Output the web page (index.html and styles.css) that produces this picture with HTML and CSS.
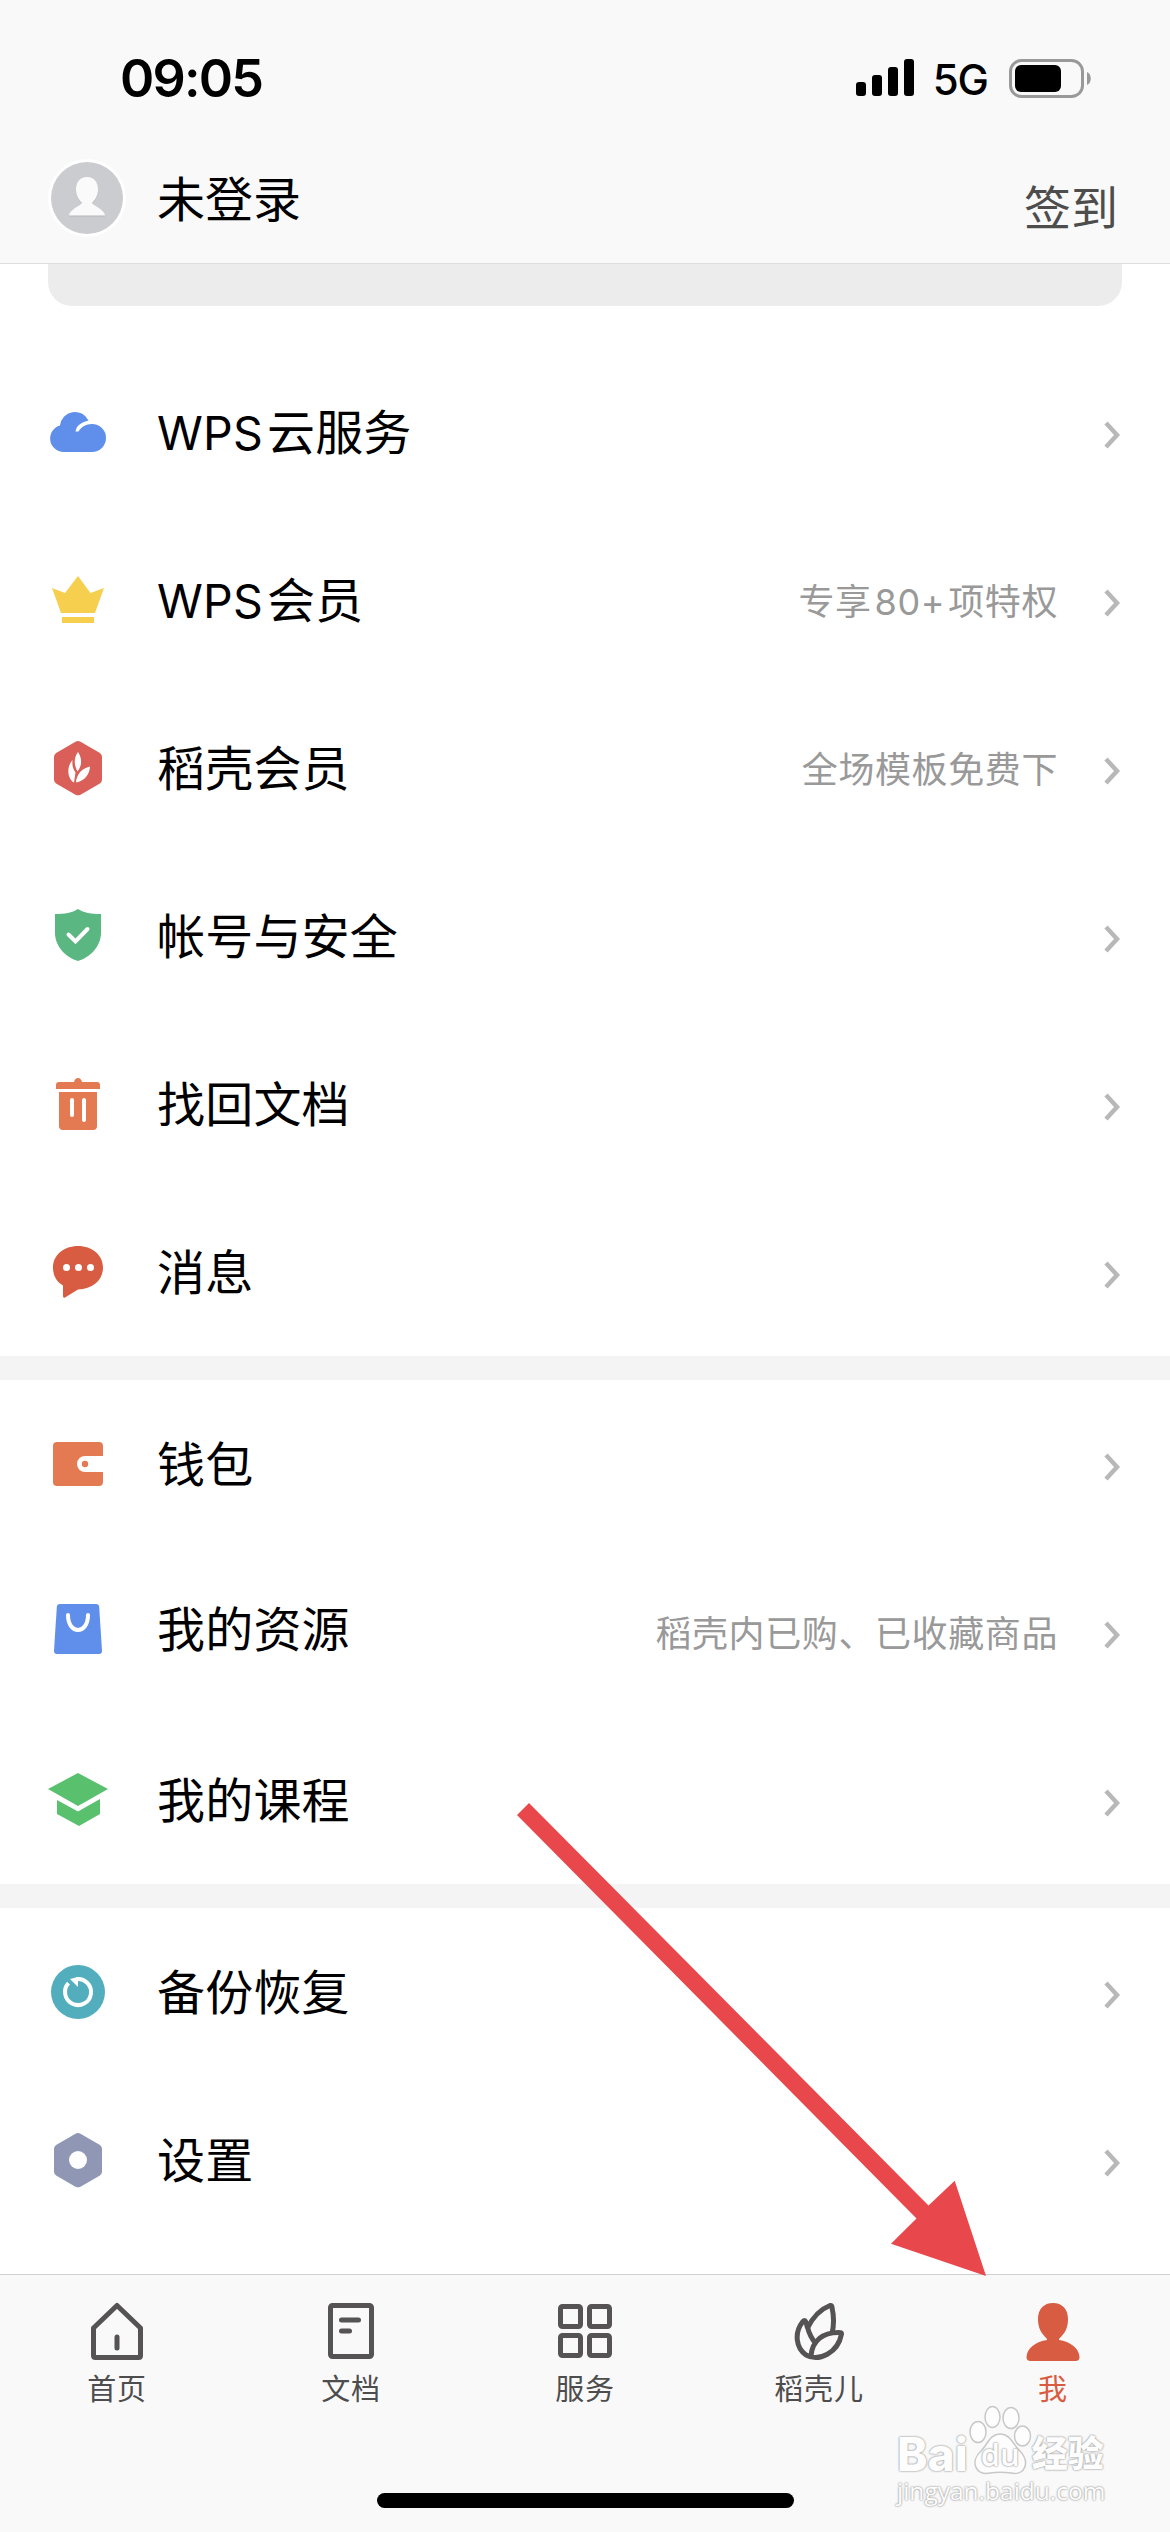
FILE: index.html
```html
<!DOCTYPE html>
<html lang="zh-CN">
<head>
    <meta charset="UTF-8">
    <meta name="viewport" content="width=device-width, initial-scale=1.0">
    <title>WPS - 我</title>
    <link rel="stylesheet" href="styles.css">
</head>
<body>
    <div class="screen">
        <header class="header">
            <div class="status-bar">
                <span class="time">09:05</span>
                <div class="status-right">
                    <svg class="signal" width="58" height="38" viewBox="0 0 58 38">
                        <rect x="0" y="23" width="10" height="14" rx="3"/>
                        <rect x="16" y="16" width="10" height="21" rx="3"/>
                        <rect x="32" y="8" width="10" height="29" rx="3"/>
                        <rect x="48" y="0" width="10" height="37" rx="3"/>
                    </svg>
                    <span class="network">5G</span>
                    <svg class="battery" width="82" height="39" viewBox="0 0 82 39">
                        <rect x="1.5" y="1.5" width="72" height="36" rx="11" fill="none" stroke="#999" stroke-width="3"/>
                        <rect x="6" y="6" width="46" height="27" rx="6"/>
                        <path d="M78 13c5 2 5 11 0 13z" fill="#999"/>
                    </svg>
                </div>
            </div>
            <div class="profile">
                <svg class="avatar" width="78" height="78" viewBox="0 0 78 78">
                    <circle cx="39" cy="39" r="39" fill="#fff"/>
                    <circle cx="39" cy="39" r="36" fill="#cbccd0"/>
                    <path d="M39 19c7 0 11 5 11 12.500c0 6-3 10.500-6 13.500c2 3 13 7 13 12.500H21c0-5.500 11-9.500 13-12.500c-3-3-6-7.500-6-13.500c0-7.500 4-12.500 11-12.500z" fill="#b5b6ba"/>
                    <path d="M39 18c7 0 11 5 11 12.500c0 6-3 10.500-6 13.500c2 3 13 7 13 12.500H21c0-5.500 11-9.500 13-12.500c-3-3-6-7.500-6-13.500c0-7.500 4-12.500 11-12.500z" fill="#fafafa"/>
                </svg>
                <span class="username">未登录</span>
                <span class="sign-in">签到</span>
            </div>
        </header>

        <main class="content">
            <div class="card"></div>

            <ul class="menu">
                <li class="menu-item">
                    <svg class="icon" viewBox="0 0 60 60">
                        <path d="M15.500 50A13.500 13.500 0 0 1 12 23.500A15 15 0 0 1 40.500 18.500C34 20 28.500 23 27.500 29.500h3C33 25 38 22 44 22a14 14 0 0 1 0 28z" fill="#5f8fea"/>
                    </svg>
                    <span class="label"><span class="latin">WPS</span>云服务</span>
                    <svg class="chevron" viewBox="0 0 20 30"><path d="M3 3l11 12-11 12"/></svg>
                </li>
                <li class="menu-item">
                    <svg class="icon" viewBox="0 0 60 60">
                        <path d="M30 6l12.500 17 13.500-5-9 25H13L4 18l13 5z" fill="#f6cf4e"/>
                        <rect x="14" y="47" width="32" height="6" fill="#f6cf4e"/>
                    </svg>
                    <span class="label"><span class="latin">WPS</span>会员</span>
                    <span class="hint">专享<span class="num">80+</span>项特权</span>
                    <svg class="chevron" viewBox="0 0 20 30"><path d="M3 3l11 12-11 12"/></svg>
                </li>
                <li class="menu-item">
                    <svg class="icon" viewBox="0 0 60 60">
                        <path d="M27.500 3.700q2.500-1.300 5 0l19 11q2.500 1.500 2.500 4v23q0 2.500-2.500 4l-19 11q-2.500 1.300-5 0l-19-11q-2.500-1.500-2.500-4v-23q0-2.500 2.500-4z" fill="#d95f58"/>
                        <path d="M30 14c4 6 4.500 13-.5 19.500c-3.500-6.500-4-13.500.5-19.500zM24.500 22c-.5 6 .5 9 3 12.500l-1.500 10c-7-4-7.500-16-1.500-22.500zM42 28.500c-.5 8-5.500 14.500-14 16c.5-8 5.500-14 14-16z" fill="#fff"/>
                    </svg>
                    <span class="label">稻壳会员</span>
                    <span class="hint">全场模板免费下</span>
                    <svg class="chevron" viewBox="0 0 20 30"><path d="M3 3l11 12-11 12"/></svg>
                </li>
                <li class="menu-item">
                    <svg class="icon" viewBox="0 0 60 60">
                        <path d="M30 3c6 4 13 5 23 5v19c0 14-12 25-23 28C19 52 7 41 7 27V8c10 0 17-1 23-5z" fill="#5bb781"/>
                        <path d="M20.500 28.500l7 7 12-12.500" fill="none" stroke="#fff" stroke-width="4" stroke-linecap="round"/>
                    </svg>
                    <span class="label">帐号与安全</span>
                    <svg class="chevron" viewBox="0 0 20 30"><path d="M3 3l11 12-11 12"/></svg>
                </li>
                <li class="menu-item">
                    <svg class="icon" viewBox="0 0 60 60">
                        <path d="M8 15v-4q0-3 3-3h15q1-4 4-4t4 4h15q3 0 3 3v4z" fill="#e37a51"/>
                        <path d="M11 18h38v34q0 4-4 4H15q-4 0-4-4z" fill="#e37a51"/>
                        <path d="M24 26v15M36 26v20" stroke="#fff" stroke-width="4" stroke-linecap="round"/>
                    </svg>
                    <span class="label">找回文档</span>
                    <svg class="chevron" viewBox="0 0 20 30"><path d="M3 3l11 12-11 12"/></svg>
                </li>
                <li class="menu-item">
                    <svg class="icon" viewBox="0 0 60 60">
                        <path d="M30 4c14 0 25 9 25 21.500S45 47 30 47.500L17 55.500q-2 .8-2-1.200V43.500C8 39.500 5 33 5 25.500C5 13 16 4 30 4z" fill="#d85c41"/>
                        <g fill="#fff"><circle cx="18.500" cy="25.500" r="3.500"/><circle cx="30.500" cy="25.500" r="3.500"/><circle cx="42.500" cy="25.500" r="3.500"/></g>
                    </svg>
                    <span class="label">消息</span>
                    <svg class="chevron" viewBox="0 0 20 30"><path d="M3 3l11 12-11 12"/></svg>
                </li>
            </ul>

            <ul class="menu">
                <li class="menu-item">
                    <svg class="icon" viewBox="0 0 60 60">
                        <path d="M9 8h42q4 0 4 4v10H37a8 8 0 0 0 0 16h18v10q0 4-4 4H9q-4 0-4-4V12q0-4 4-4z" fill="#e37a51"/>
                        <circle cx="37" cy="30" r="3.200" fill="#e37a51"/>
                    </svg>
                    <span class="label">钱包</span>
                    <svg class="chevron" viewBox="0 0 20 30"><path d="M3 3l11 12-11 12"/></svg>
                </li>
                <li class="menu-item raised">
                    <svg class="icon" viewBox="0 0 60 60">
                        <path d="M12 5h36q3 0 3.200 3l2.800 44q0 3-3 3H9q-3 0-3-3L8.800 8Q9 5 12 5z" fill="#5f8fea"/>
                        <path d="M20 16c0 20 20 20 20 0" fill="none" stroke="#fff" stroke-width="4" stroke-linecap="round"/>
                    </svg>
                    <span class="label">我的资源</span>
                    <span class="hint">稻壳内已购、已收藏商品</span>
                    <svg class="chevron" viewBox="0 0 20 30"><path d="M3 3l11 12-11 12"/></svg>
                </li>
                <li class="menu-item">
                    <svg class="icon" viewBox="0 0 60 60">
                        <path d="M30 3l30 16-30 17L0 19z" fill="#59c06e"/>
                        <path d="M9 30l21 11.500L52 29v15L31 56 9 44z" fill="#59c06e"/>
                    </svg>
                    <span class="label">我的课程</span>
                    <svg class="chevron" viewBox="0 0 20 30"><path d="M3 3l11 12-11 12"/></svg>
                </li>
            </ul>

            <ul class="menu">
                <li class="menu-item">
                    <svg class="icon" viewBox="0 0 60 60">
                        <circle cx="30" cy="30" r="27" fill="#52aebc"/>
                        <path d="M28 17.200a13 13 0 1 1-7.500 4" fill="none" stroke="#fff" stroke-width="4"/>
                        <path d="M22 17l8-2v10z" fill="#fff"/>
                    </svg>
                    <span class="label">备份恢复</span>
                    <svg class="chevron" viewBox="0 0 20 30"><path d="M3 3l11 12-11 12"/></svg>
                </li>
                <li class="menu-item">
                    <svg class="icon" viewBox="0 0 60 60">
                        <path d="M27.500 3.700q2.500-1.300 5 0l19 11q2.500 1.500 2.500 4v23q0 2.500-2.500 4l-19 11q-2.500 1.300-5 0l-19-11q-2.500-1.500-2.500-4v-23q0-2.500 2.500-4z" fill="#8f97b4"/>
                        <circle cx="30" cy="30" r="9" fill="#fff"/>
                    </svg>
                    <span class="label">设置</span>
                    <svg class="chevron" viewBox="0 0 20 30"><path d="M3 3l11 12-11 12"/></svg>
                </li>
            </ul>
        </main>

        <nav class="tab-bar">
            <div class="tabs">
                <a class="tab">
                    <svg viewBox="0 0 60 60">
                        <path d="M30 4.500L53.500 27v27.500q0 2-2 2h-43q-2 0-2-2V27z"/>
                        <path d="M30 36v11" stroke-linecap="round"/>
                    </svg>
                    <span>首页</span>
                </a>
                <a class="tab">
                    <svg viewBox="0 0 60 60">
                        <rect x="9.500" y="4.500" width="41" height="51" rx="2"/>
                        <path d="M20.500 19h17M20.500 30h8" stroke-linecap="round"/>
                    </svg>
                    <span>文档</span>
                </a>
                <a class="tab">
                    <svg viewBox="0 0 60 60">
                        <rect x="5.500" y="5.500" width="20" height="20" rx="2"/>
                        <rect x="34.500" y="5.500" width="20" height="20" rx="2"/>
                        <rect x="5.500" y="34.500" width="20" height="20" rx="2"/>
                        <rect x="34.500" y="34.500" width="20" height="20" rx="2"/>
                    </svg>
                    <span>服务</span>
                </a>
                <a class="tab">
                    <svg viewBox="0 0 60 60">
                        <path d="M18.500 27C24 16 32 8 41 4.500Q43 4 43 6.500C45 15 45 24 43 33"/>
                        <path d="M18.500 27l-1.500-6q-1.500-3-3.500 0C5 32 7 47 17 54c13 7 32-2 35.500-21c0-1.500-1-1.500-2-1.500C34 31 23 40 22 55"/>
                        <path d="M18.500 26c1.500 7 4.500 12 8.500 17"/>
                    </svg>
                    <span>稻壳儿</span>
                </a>
                <a class="tab active">
                    <svg viewBox="0 0 60 60">
                        <path d="M30 2c9 0 15 6 15 16c0 9-3 14-9 20v1c11 1.500 20 8 20.500 17q0 4-4 4h-45q-4 0-4-4C4 47 13 40.500 24 39v-1c-6-6-9-11-9-20c0-10 6-16 15-16z"/>
                    </svg>
                    <span>我</span>
                </a>
            </div>
            <div class="home-indicator"></div>
        </nav>

        <svg class="arrow" width="470" height="476" viewBox="516 1802 470 476">
            <path d="M529 1803L928.500 2205.500 954.700 2180.700 986 2276 891 2243.700 916.500 2218.500 517 1815z" fill="#e8474b"/>
        </svg>

        <div class="watermark">
            <div class="wm-logo">
                <span class="wm-text">Bai</span>
                <span class="wm-paw">
                    <svg width="64" height="70" viewBox="0 0 64 70">
                        <ellipse cx="10" cy="27" rx="8" ry="10.500"/>
                        <ellipse cx="24.500" cy="12" rx="7.500" ry="10.500"/>
                        <ellipse cx="43" cy="13" rx="8" ry="10.500"/>
                        <ellipse cx="54.500" cy="31" rx="8" ry="10"/>
                        <path d="M32 29c10 0 13 10 19 16c12 12 6 26-8 23c-7-1-15-1-21 0c-15 3-20-12-9-22c7-7 9-17 19-17z"/>
                    </svg>
                    <b>du</b>
                </span>
                <span class="wm-text wm-cn">经验</span>
            </div>
            <div class="wm-url">jingyan.baidu.com</div>
        </div>
    </div>
</body>
</html>
```
FILE: styles.css
```css
* {
    margin: 0;
    padding: 0;
    box-sizing: border-box;
}
body {
    font-family: Inter, "Noto Sans CJK SC", sans-serif;
    background-color: #fff;
    color: #000;
}
.screen {
    position: relative;
    display: flex;
    flex-direction: column;
    width: 1170px;
    height: 2532px;
    overflow: hidden;
}

/* header */
.header {
    height: 264px;
    background-color: #f9f9f9;
    border-bottom: 1px solid #dedede;
}
.status-bar {
    display: flex;
    justify-content: space-between;
    align-items: center;
    height: 156px;
    padding: 0 79px 0 120px;
}
.time {
    font-size: 52px;
    font-weight: 600;
    letter-spacing: -1.8px;
}
.status-right {
    display: flex;
    align-items: center;
}
.network {
    margin: 2px 21px 0 19px;
    font-size: 42px;
    font-weight: 500;
    letter-spacing: -1px;
}
.profile {
    display: flex;
    align-items: center;
    height: 84px;
    padding: 0 52px 0 48px;
}
.username {
    margin-left: 31px;
    padding-bottom: 5px;
    font-size: 48px;
}
.sign-in {
    margin-left: auto;
    padding-top: 12px;
    font-size: 47px;
    color: #4d4d4d;
}

/* menu */
.content {
    flex: 1;
}
.card {
    height: 42px;
    margin: 0 48px 42px;
    background-color: #ececec;
    border-radius: 0 0 24px 24px;
}
.menu {
    list-style: none;
}
.menu + .menu {
    border-top: 24px solid #f4f4f4;
}
.menu-item {
    display: flex;
    align-items: center;
    height: 168px;
    padding: 0 47px 0 48px;
}
.icon {
    width: 60px;
    height: 60px;
}
.label {
    margin-left: 49px;
    padding-top: 1px;
    font-size: 48px;
    line-height: 72px;
    letter-spacing: 0.2px;
}
.latin {
    margin-right: 4px;
    font-size: 46.5px;
}
.raised .icon,
.raised .label {
    margin-bottom: 6px;
}
.hint {
    margin-left: auto;
    padding-bottom: 3px;
    font-size: 36px;
    letter-spacing: 0.6px;
    color: #999;
}
.num {
    margin: 0 3px;
}
.chevron {
    width: 20px;
    height: 30px;
    margin: 5px 0 0 auto;
    fill: none;
    stroke: #b8b8b8;
    stroke-width: 4.5;
}
.hint + .chevron {
    margin-left: 45px;
}

/* bottom tabs */
.tab-bar {
    height: 258px;
    background-color: #f9f9f9;
    border-top: 1px solid #cfcfcf;
}
.tabs {
    display: grid;
    grid-template-columns: repeat(5, 1fr);
    height: 218px;
    padding-top: 26px;
}
.tab {
    display: flex;
    flex-direction: column;
    align-items: center;
    font-size: 29px;
    line-height: 44px;
    letter-spacing: 0.8px;
    color: #4d4d4d;
}
.tab svg {
    width: 60px;
    height: 60px;
    margin-bottom: 7px;
    fill: none;
    stroke: #555354;
    stroke-width: 5;
    stroke-linejoin: round;
}
.tab.active {
    color: #d85c41;
}
.tab.active svg {
    fill: #d85c41;
    stroke: none;
}
.home-indicator {
    width: 417px;
    height: 15px;
    margin: 0 auto;
    background-color: #000;
    border-radius: 8px;
}

/* pointer drawn over the list */
.arrow {
    position: absolute;
    left: 516px;
    top: 1802px;
}

/* watermark */
.watermark {
    position: absolute;
    left: 897px;
    top: 2404px;
    color: #fdfdfd;
    font-family: "Open Sans", "Noto Sans CJK SC", sans-serif;
    text-shadow: 0 0 2px #999, 0 0 2px #aaa;
}
.wm-logo {
    display: flex;
    align-items: flex-end;
    height: 71px;
}
.wm-text {
    margin-bottom: 1px;
    font-family: Inter, "Noto Sans CJK SC", sans-serif;
    font-size: 46px;
    font-weight: 800;
    line-height: 40px;
}
.wm-cn {
    font-size: 36px;
    font-weight: 900;
}
.wm-paw {
    position: relative;
    width: 64px;
    height: 70px;
}
.wm-paw svg {
    display: block;
    overflow: visible;
    fill: #fdfdfd;
    stroke: #c8c8c8;
    stroke-width: 1.5;
}
.wm-paw b {
    position: absolute;
    left: 13px;
    bottom: 4px;
    font-size: 31px;
    line-height: 34px;
    font-weight: 600;
}
.wm-url {
    font-size: 24.5px;
    line-height: 32px;
}
```
